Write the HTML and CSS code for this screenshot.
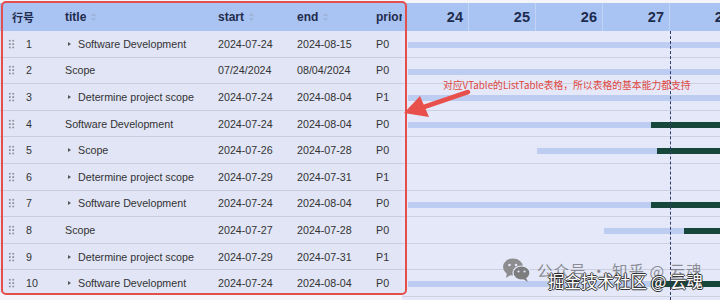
FILE: index.html
```html
<!doctype html>
<html>
<head>
	<meta charset="utf-8" />
	<title>Gantt ListTable</title>
	<link rel="stylesheet" href="styles.css">
</head>
<body>
<div class="stage">
	<div class="list">
		<div class="lrow lhead">
			<div class="cell num">行号</div>
			<div class="cell">title <span class="sort"><svg width="5" height="8" viewBox="0 0 5 8"><path d="M2.5 0L5 3H0z M2.5 8L5 5H0z" fill="#9fb2d8"/></svg></span></div>
			<div class="cell">start <span class="sort"><svg width="5" height="8" viewBox="0 0 5 8"><path d="M2.5 0L5 3H0z M2.5 8L5 5H0z" fill="#9fb2d8"/></svg></span></div>
			<div class="cell">end <span class="sort"><svg width="5" height="8" viewBox="0 0 5 8"><path d="M2.5 0L5 3H0z M2.5 8L5 5H0z" fill="#9fb2d8"/></svg></span></div>
			<div class="cell">priority</div>
		</div>
		<div class="lrow"><div class="cell num"><i class="grip"></i>1</div><div class="cell"><b class="caret"></b>Software Development</div><div class="cell">2024-07-24</div><div class="cell">2024-08-15</div><div class="cell">P0</div></div>
		<div class="lrow"><div class="cell num"><i class="grip"></i>2</div><div class="cell">Scope</div><div class="cell">07/24/2024</div><div class="cell">08/04/2024</div><div class="cell">P0</div></div>
		<div class="lrow"><div class="cell num"><i class="grip"></i>3</div><div class="cell"><b class="caret"></b>Determine project scope</div><div class="cell">2024-07-24</div><div class="cell">2024-08-04</div><div class="cell">P1</div></div>
		<div class="lrow"><div class="cell num"><i class="grip"></i>4</div><div class="cell">Software Development</div><div class="cell">2024-07-24</div><div class="cell">2024-08-04</div><div class="cell">P0</div></div>
		<div class="lrow"><div class="cell num"><i class="grip"></i>5</div><div class="cell"><b class="caret"></b>Scope</div><div class="cell">2024-07-26</div><div class="cell">2024-07-28</div><div class="cell">P0</div></div>
		<div class="lrow"><div class="cell num"><i class="grip"></i>6</div><div class="cell"><b class="caret"></b>Determine project scope</div><div class="cell">2024-07-29</div><div class="cell">2024-07-31</div><div class="cell">P1</div></div>
		<div class="lrow"><div class="cell num"><i class="grip"></i>7</div><div class="cell"><b class="caret"></b>Software Development</div><div class="cell">2024-07-24</div><div class="cell">2024-08-04</div><div class="cell">P0</div></div>
		<div class="lrow"><div class="cell num"><i class="grip"></i>8</div><div class="cell">Scope</div><div class="cell">2024-07-27</div><div class="cell">2024-07-28</div><div class="cell">P0</div></div>
		<div class="lrow"><div class="cell num"><i class="grip"></i>9</div><div class="cell"><b class="caret"></b>Determine project scope</div><div class="cell">2024-07-29</div><div class="cell">2024-07-31</div><div class="cell">P1</div></div>
		<div class="lrow"><div class="cell num"><i class="grip"></i>10</div><div class="cell"><b class="caret"></b>Software Development</div><div class="cell">2024-07-24</div><div class="cell">2024-08-04</div><div class="cell">P0</div></div>
	</div>

	<div class="gantt">
		<div class="timeline">
			<div class="day">24</div>
			<div class="day">25</div>
			<div class="day">26</div>
			<div class="day">27</div>
			<div class="day">28</div>
		</div>
		<div class="grow"><span class="bar" style="left:6px;width:340px"></span></div>
		<div class="grow"><span class="bar" style="left:6px;width:340px"></span></div>
		<div class="grow"><span class="bar" style="left:6px;width:340px"></span></div>
		<div class="grow"><span class="bar" style="left:6px;width:243px"></span><span class="bar done" style="left:249px;width:90px"></span></div>
		<div class="grow"><span class="bar" style="left:135px;width:120px"></span><span class="bar done" style="left:255px;width:90px"></span></div>
		<div class="grow"></div>
		<div class="grow"><span class="bar" style="left:6px;width:243px"></span><span class="bar done" style="left:249px;width:90px"></span></div>
		<div class="grow"><span class="bar" style="left:202px;width:80px"></span><span class="bar done" style="left:282px;width:60px"></span></div>
		<div class="grow"></div>
		<div class="grow"><span class="bar" style="left:6px;width:243px"></span><span class="bar done" style="left:249px;width:90px"></span></div>
		<div class="today"></div>
	</div>

	<div class="frame"></div>
	<div class="note">对应VTable的ListTable表格，所以表格的基本能力都支持</div>
	<svg class="arrow" width="70" height="34" viewBox="0 0 70 34">
		<path d="M66 3 L22 18" stroke="#e8504c" stroke-width="4.5" stroke-linecap="round" fill="none"/>
		<polygon points="2,24 18,7 27,28" fill="#e8504c"/>
	</svg>
	<div class="mark">
		<svg class="wechat" width="28" height="24" viewBox="0 0 28 24">
			<ellipse cx="10" cy="9" rx="10" ry="8.5" fill="#8d8d90"/>
			<polygon points="4,15 3,20 9,16" fill="#8d8d90"/>
			<ellipse cx="18.5" cy="15" rx="8.5" ry="7" fill="#7d7d80" stroke="#e4e8f9" stroke-width="1.2"/>
			<polygon points="23,20 25,24 20,21" fill="#7d7d80"/>
			<circle cx="6.5" cy="7" r="1.3" fill="#e4e8f9"/>
			<circle cx="13" cy="7" r="1.3" fill="#e4e8f9"/>
			<circle cx="15.5" cy="13.5" r="1.1" fill="#e4e8f9"/>
			<circle cx="21.5" cy="13.5" r="1.1" fill="#e4e8f9"/>
		</svg>
		<span class="mark-gray">公众号 · 知乎 @ 云魂</span>
	</div>
	<div class="mark-white">掘金技术社区 @ 云魂</div>
</div>
</body>
</html>
```

FILE: styles.css
```css
body
{
	margin: 0;
	background: #f5f4f8;
	font-family: "Liberation Sans", Arial, "Noto Sans CJK SC", sans-serif;
	overflow: hidden;
}

.stage
{
	position: relative;
	display: flex;
	width: 720px;
	height: 300px;
	padding-top: 3px;
	box-sizing: border-box;
	overflow: hidden;
}

/* list table */

.list
{
	width: 402px;
	height: 290px;
	flex: none;
	overflow: hidden;
	background: #e1e5f6;
}

.lrow
{
	display: grid;
	grid-template-columns: 56px 153px 79px 79px 35px;
	height: 26.6px;
	box-sizing: border-box;
	border-bottom: 1px solid #c8ccdb;
	font-size: 10.7px;
	color: #333;
}

.lhead
{
	height: 28px;
	background: #a9c3f3;
	border-bottom: none;
	font-size: 12px;
	font-weight: bold;
	color: #1f2c4c;
}

.cell
{
	display: flex;
	align-items: center;
	padding-left: 9px;
	white-space: nowrap;
	overflow: hidden;
}

.num
{
	padding-left: 8px;
}

.lhead .num
{
	padding-left: 12px;
	font-family: "Noto Sans CJK SC", sans-serif;
	font-size: 11px;
}

.sort
{
	display: inline-flex;
	margin-left: 5px;
}

.grip
{
	width: 7px;
	height: 10px;
	margin-right: 11px;
	background-image: radial-gradient(circle, #8c8f99 1px, transparent 1.3px);
	background-size: 3.5px 3.4px;
}

.caret
{
	width: 0;
	height: 0;
	margin: 0 7px 0 3px;
	border-left: 3.5px solid #555;
	border-top: 2.5px solid transparent;
	border-bottom: 2.5px solid transparent;
}

/* gantt */

.gantt
{
	position: relative;
	flex: 1;
	background: #e4e8f9;
}

.timeline
{
	display: grid;
	grid-template-columns: repeat(5, 67px);
	height: 28px;
	background: #a9c3f3;
}

.day
{
	display: flex;
	align-items: center;
	justify-content: flex-end;
	padding-right: 5px;
	border-right: 1px solid #c3d3f6;
	font-size: 14.5px;
	font-weight: bold;
	color: #1d2c4d;
}

.grow
{
	position: relative;
	height: 26.6px;
	box-sizing: border-box;
	border-bottom: 1px solid #cdd0de;
}

.bar
{
	position: absolute;
	top: 11px;
	height: 6px;
	background: #bccdf1;
}

.bar.done
{
	background: #17473a;
}

.today
{
	position: absolute;
	left: 268px;
	top: 28px;
	bottom: 0;
	border-left: 1px dashed #2c3a6e;
}

/* annotations */

.frame
{
	position: absolute;
	left: 1px;
	top: 1px;
	width: 402px;
	height: 290px;
	border: 2px solid #e34f4c;
	border-radius: 5px;
}

.note
{
	position: absolute;
	left: 443px;
	top: 78px;
	font-family: "Noto Sans CJK SC", sans-serif;
	font-size: 9.8px;
	color: #e0473f;
	white-space: nowrap;
}

.arrow
{
	position: absolute;
	left: 402px;
	top: 89px;
}

.mark
{
	position: absolute;
	left: 503px;
	top: 258px;
	display: flex;
	align-items: center;
	gap: 6px;
}

.mark-gray
{
	font-family: "Noto Sans CJK SC", sans-serif;
	font-size: 15.5px;
	letter-spacing: 1px;
	color: rgba(110, 110, 115, 0.75);
	white-space: nowrap;
}

.mark-white
{
	position: absolute;
	left: 548px;
	top: 270px;
	font-family: "Noto Sans CJK SC", sans-serif;
	font-size: 16.5px;
	line-height: 22px;
	color: #fff;
	white-space: nowrap;
	text-shadow: -1px 0 #333, 1px 0 #333, 0 -1px #333, 0 1px #333;
}
```
